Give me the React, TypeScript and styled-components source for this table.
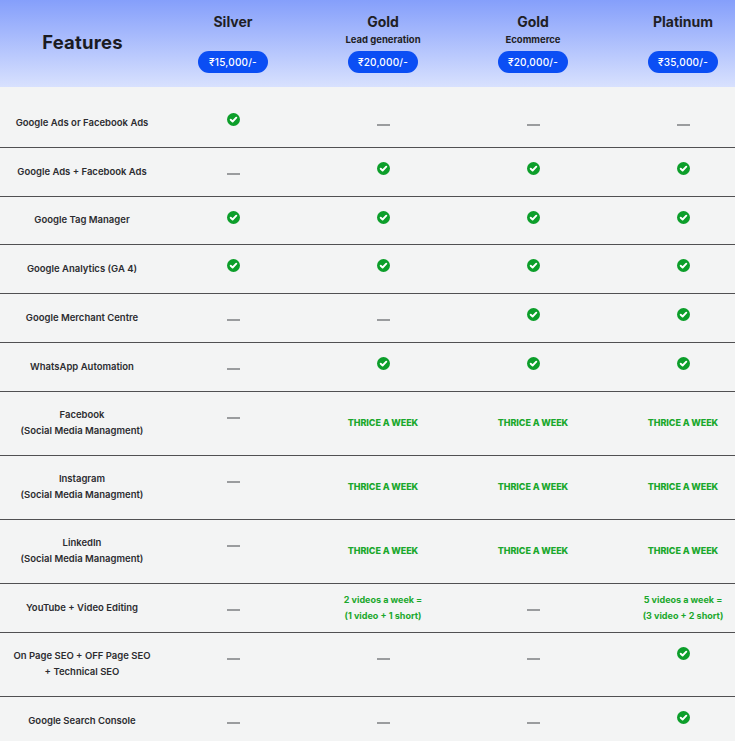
import React from "react";
import styled, { createGlobalStyle } from "styled-components";

const GlobalStyle = createGlobalStyle`
  html, body {
    margin: 0;
    padding: 0;
    background: #f3f4f4;
    overflow-x: hidden;
  }
  body {
    font-family: Inter, "Open Sans", "Liberation Sans", sans-serif;
    color: #2e2e30;
  }
`;

const COLS = "158px repeat(4, 150px)";

const Page = styled.div`
  width: 758px;
  background: #f3f4f4;
`;

const Header = styled.div`
  display: grid;
  grid-template-columns: ${COLS};
  height: 87px;
  background: linear-gradient(180deg, #859ffb 0%, #d8e1fe 100%);
`;

const FeaturesTitle = styled.div`
  display: flex;
  align-items: center;
  justify-content: center;
  padding-left: 7px;
  padding-bottom: 3px;
  font-size: 18.5px;
  font-weight: 700;
  color: #1b1b22;
  letter-spacing: 0.2px;
`;

const PlanCell = styled.div`
  display: flex;
  flex-direction: column;
  align-items: center;
  padding-top: 14px;
`;

const PlanName = styled.div`
  font-size: 14px;
  line-height: 16px;
  font-weight: 700;
  color: #1f1f25;
`;

const PlanSub = styled.div`
  margin-top: 4px;
  height: 12px;
  font-size: 9.5px;
  line-height: 12px;
  font-weight: 700;
  color: #1f1f25;
`;

const Price = styled.div`
  margin-top: 5px;
  width: 70px;
  height: 22px;
  border-radius: 11px;
  background: #0b4ef4;
  color: #ffffff;
  font-size: 10px;
  font-weight: 500;
  display: flex;
  align-items: center;
  justify-content: center;
  letter-spacing: 0.2px;
`;

const Body = styled.div`
  padding-top: 12px;
`;

const Row = styled.div<{ $last?: boolean }>`
  display: grid;
  grid-template-columns: ${COLS};
  min-height: 48.8px;
  box-sizing: border-box;
  border-bottom: ${(p) => (p.$last ? "none" : "1px solid #505052")};
`;

const Label = styled.div`
  display: flex;
  align-items: center;
  justify-content: center;
  text-align: center;
  padding: 15.5px 4px 15.5px 10px;
  font-size: 9.5px;
  line-height: 16px;
  font-weight: 600;
  color: #2c2c30;
  white-space: pre-line;
`;

const IconCell = styled.div`
  display: flex;
  justify-content: center;
  align-items: flex-start;
  padding-top: 14px;
`;

const TextCell = styled.div`
  display: flex;
  align-items: center;
  justify-content: center;
  text-align: center;
  font-size: 9px;
  line-height: 16px;
  font-weight: 700;
  color: #1aa82c;
  white-space: pre-line;
`;

const Caps = styled.span`
  text-transform: uppercase;
  font-weight: 800;
  letter-spacing: -0.1px;
`;

const Dash = styled.span`
  display: block;
  margin-top: 11px;
  width: 13px;
  height: 2px;
  background: #9a9c9e;
`;

const Check = () => (
  <svg width="13" height="13" viewBox="0 0 13 13">
    <circle cx="6.5" cy="6.5" r="6.5" fill="#0c9e2a" />
    <path
      d="M3.7 6.7 L5.6 8.5 L9.3 4.7"
      fill="none"
      stroke="#ffffff"
      strokeWidth="1.9"
      strokeLinecap="round"
      strokeLinejoin="round"
    />
  </svg>
);

type Val = "c" | "d" | string;

const plans = [
  { name: "Silver", sub: "", price: "₹15,000/-" },
  { name: "Gold", sub: "Lead generation", price: "₹20,000/-" },
  { name: "Gold", sub: "Ecommerce", price: "₹20,000/-" },
  { name: "Platinum", sub: "", price: "₹35,000/-" },
];

const T = "THRICE A WEEK";

const rows: { label: string; vals: Val[] }[] = [
  { label: "Google Ads or Facebook Ads", vals: ["c", "d", "d", "d"] },
  { label: "Google Ads + Facebook Ads", vals: ["d", "c", "c", "c"] },
  { label: "Google Tag Manager", vals: ["c", "c", "c", "c"] },
  { label: "Google Analytics (GA 4)", vals: ["c", "c", "c", "c"] },
  { label: "Google Merchant Centre", vals: ["d", "d", "c", "c"] },
  { label: "WhatsApp Automation", vals: ["d", "c", "c", "c"] },
  { label: "Facebook\n(Social Media Managment)", vals: ["d", T, T, T] },
  { label: "Instagram\n(Social Media Managment)", vals: ["d", T, T, T] },
  { label: "LinkedIn\n(Social Media Managment)", vals: ["d", T, T, T] },
  {
    label: "YouTube + Video Editing",
    vals: ["d", "2 videos a week =\n(1 video + 1 short)", "d", "5 videos a week =\n(3 video + 2 short)"],
  },
  { label: "On Page SEO + OFF Page SEO\n+ Technical SEO", vals: ["d", "d", "d", "c"] },
  { label: "Google Search Console", vals: ["d", "d", "d", "c"] },
];

const Cell = ({ v }: { v: Val }) => {
  if (v === "c")
    return (
      <IconCell>
        <Check />
      </IconCell>
    );
  if (v === "d")
    return (
      <IconCell>
        <Dash />
      </IconCell>
    );
  return <TextCell>{v === T ? <Caps>{v}</Caps> : v}</TextCell>;
};

export default function App() {
  return (
    <>
      <GlobalStyle />
      <Page>
        <Header>
          <FeaturesTitle>Features</FeaturesTitle>
          {plans.map((p, i) => (
            <PlanCell key={i}>
              <PlanName>{p.name}</PlanName>
              <PlanSub>{p.sub}</PlanSub>
              <Price>{p.price}</Price>
            </PlanCell>
          ))}
        </Header>
        <Body>
          {rows.map((r, i) => (
            <Row key={i} $last={i === rows.length - 1}>
              <Label>{r.label}</Label>
              {r.vals.map((v, j) => (
                <Cell key={j} v={v} />
              ))}
            </Row>
          ))}
        </Body>
      </Page>
    </>
  );
}
